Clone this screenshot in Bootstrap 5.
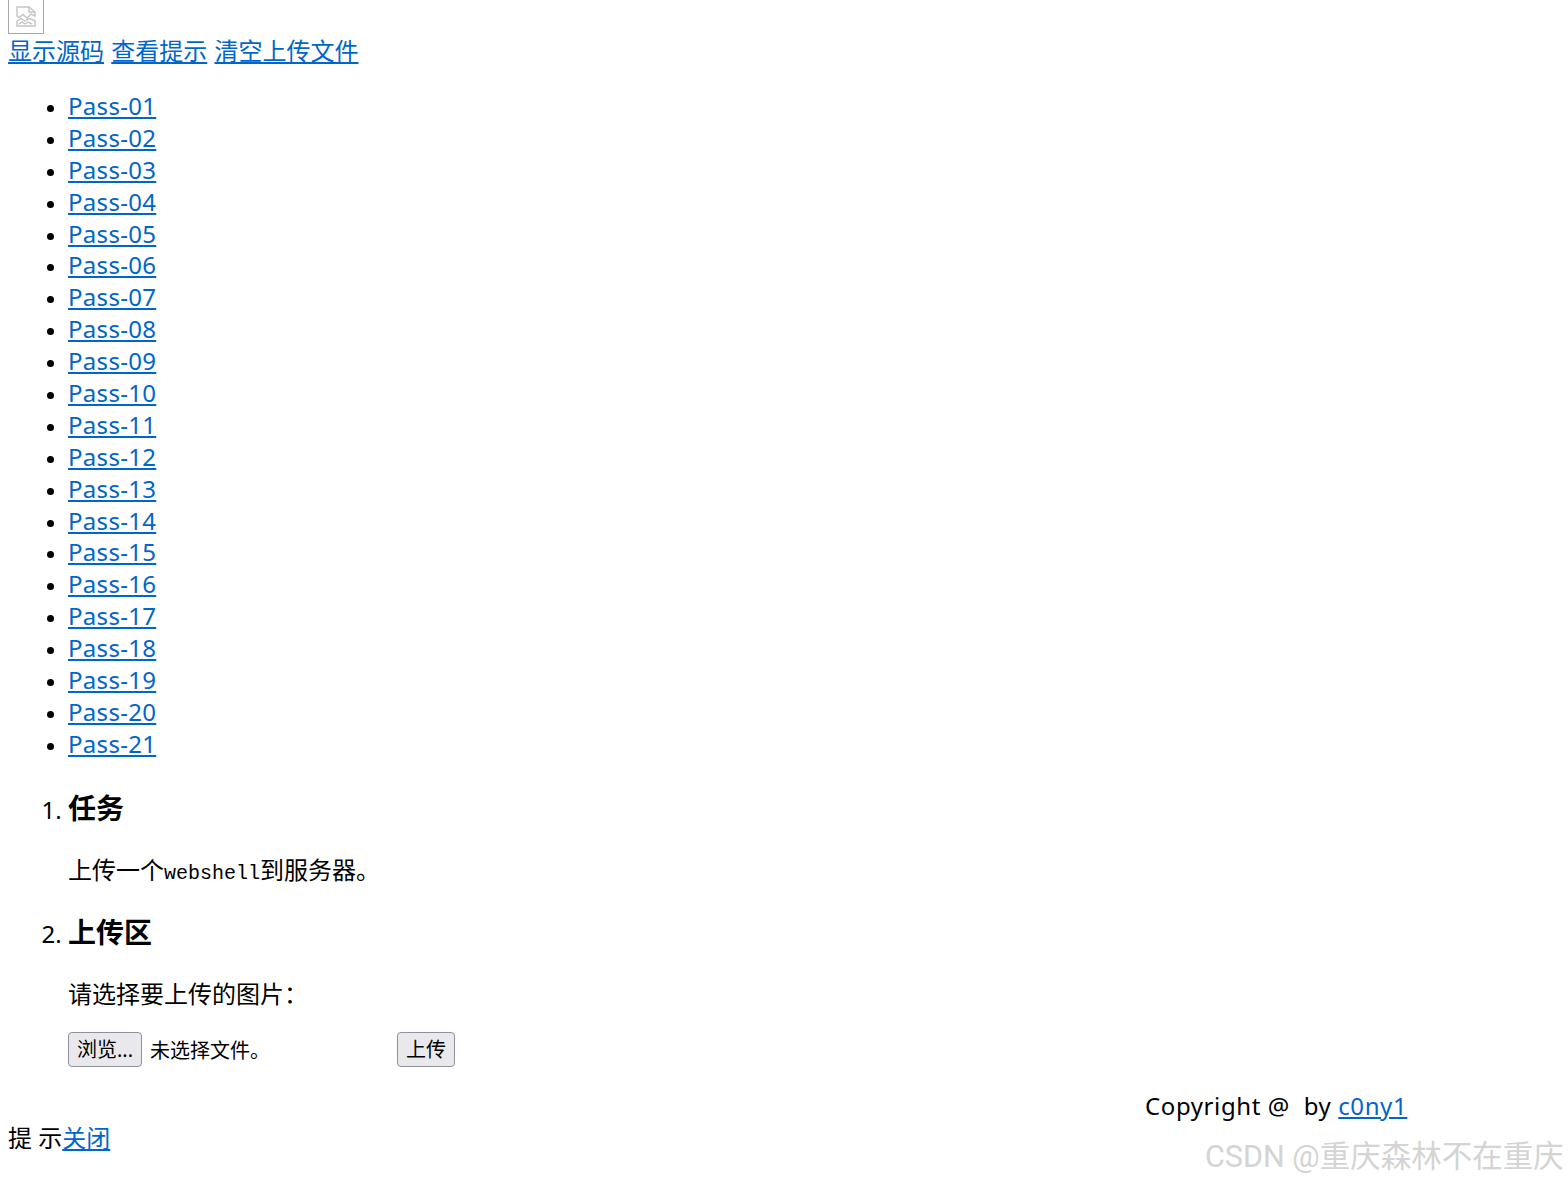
<!DOCTYPE html>
<html lang="zh-CN">
<head>
    <meta charset="UTF-8">
    <meta name="viewport" content="width=device-width, initial-scale=1.0">
    <title>upload-labs</title>
    <link rel="stylesheet" href="https://cdn.jsdelivr.net/npm/bootstrap@5.3.3/dist/css/bootstrap.min.css">
    <style>
        html, body {
            height: 100%;
        }
        body {
            position: relative;
            overflow: hidden;
            background: #fff;
            color: #000;
            font-family: "Noto Sans", "Noto Sans CJK SC", sans-serif;
            font-size: 24px;
            line-height: 32px;
        }
        a {
            color: #0066cc;
        }
        .page-wrap {
            padding: 0 8px;
        }
        .logo-box {
            display: block;
            width: 36px;
            height: 34px;
            border: 1px solid #a8a8a8;
            border-top: 0;
        }
        .logo-box svg {
            display: block;
            margin: 0 0 0 7px;
            padding-top: 6px;
        }
        .top-links {
            height: 34px;
            padding-top: 1px;
            word-spacing: 1px;
        }
        .pass-list {
            margin: 22px 0 0;
            padding-left: 60px;
        }
        .pass-list li {
            height: 31.9px;
            letter-spacing: .3px;
        }
        .pass-list li::marker {
            font-size: 21px;
        }
        .task-list {
            margin: 16px 0 0;
            padding-left: 60px;
        }
        .task-list h3 {
            margin: 0;
            padding-top: 16px;
            height: 62px;
            font-size: 28px;
            line-height: 32px;
            font-weight: 700;
            color: #000;
        }
        .task-list p {
            margin: 0;
            height: 62px;
            padding-top: 16px;
        }
        .shell-txt {
            font-family: "Liberation Mono", monospace;
            font-size: 20px;
        }
        .upload-row {
            margin-top: 8px;
            height: 35px;
            font-size: 20px;
        }
        .file-btn {
            height: 35px;
            padding: 2px 0 0;
            background: #e9e9ed;
            border: 1px solid #8f8f9d;
            border-radius: 4px;
            font-size: 20px;
            line-height: 30px;
            color: #000;
            white-space: nowrap;
        }
        .browse-btn {
            width: 74px;
        }
        .send-btn {
            width: 58px;
        }
        .file-name {
            width: 255px;
            padding: 4px 0 0 8px;
        }
        .copy-row {
            height: 32px;
            margin-top: 23px;
            padding-left: 1137px;
            white-space: pre;
            letter-spacing: .6px;
        }
        .tip-row {
            height: 32px;
        }
        .watermark {
            position: absolute;
            left: 1205px;
            top: 1139px;
            font-family: Roboto, "Noto Sans CJK SC", sans-serif;
            font-size: 30.5px;
            line-height: 36px;
            color: #d4d4d4;
            white-space: nowrap;
        }
    </style>
</head>
<body>

<div class="page-wrap">
    <a href="#" class="logo-box">
        <svg width="20" height="27" viewBox="0 0 20 21" fill="none" stroke="#c4c4c4" stroke-width="1.4">
            <path d="M1 1H13L19 6V10L15 8L11 12L7 8.500L3 11.500L1 10Z"/>
            <path d="M13 1V6H19"/>
            <path d="M1 15L5 12.500L9 15L13 12.500L19 14.500V20H1Z"/>
            <path d="M3 18L6 16L9 18L12 16L16 18"/>
        </svg>
    </a>
    <div class="top-links">
        <a href="#">显示源码</a> <a href="#">查看提示</a> <a href="#">清空上传文件</a>
    </div>

    <ul class="pass-list">
        <li><a href="#">Pass-01</a></li>
        <li><a href="#">Pass-02</a></li>
        <li><a href="#">Pass-03</a></li>
        <li><a href="#">Pass-04</a></li>
        <li><a href="#">Pass-05</a></li>
        <li><a href="#">Pass-06</a></li>
        <li><a href="#">Pass-07</a></li>
        <li><a href="#">Pass-08</a></li>
        <li><a href="#">Pass-09</a></li>
        <li><a href="#">Pass-10</a></li>
        <li><a href="#">Pass-11</a></li>
        <li><a href="#">Pass-12</a></li>
        <li><a href="#">Pass-13</a></li>
        <li><a href="#">Pass-14</a></li>
        <li><a href="#">Pass-15</a></li>
        <li><a href="#">Pass-16</a></li>
        <li><a href="#">Pass-17</a></li>
        <li><a href="#">Pass-18</a></li>
        <li><a href="#">Pass-19</a></li>
        <li><a href="#">Pass-20</a></li>
        <li><a href="#">Pass-21</a></li>
    </ul>

    <ol class="task-list">
        <li>
            <h3>任务</h3>
            <p>上传一个<span class="shell-txt">webshell</span>到服务器。</p>
        </li>
        <li>
            <h3>上传区</h3>
            <p>请选择要上传的图片：</p>
            <form class="upload-row d-flex align-items-center" onsubmit="return false">
                <button type="button" class="file-btn browse-btn">浏览...</button>
                <span class="file-name">未选择文件。</span>
                <button type="submit" class="file-btn send-btn">上传</button>
            </form>
        </li>
    </ol>

    <div class="copy-row">Copyright @  by <a href="#">c0ny1</a></div>
    <div class="tip-row">提 示<a href="#">关闭</a></div>
</div>

<div class="watermark">CSDN @重庆森林不在重庆</div>

<script src="https://cdn.jsdelivr.net/npm/bootstrap@5.3.3/dist/js/bootstrap.bundle.min.js"></script>
</body>
</html>
